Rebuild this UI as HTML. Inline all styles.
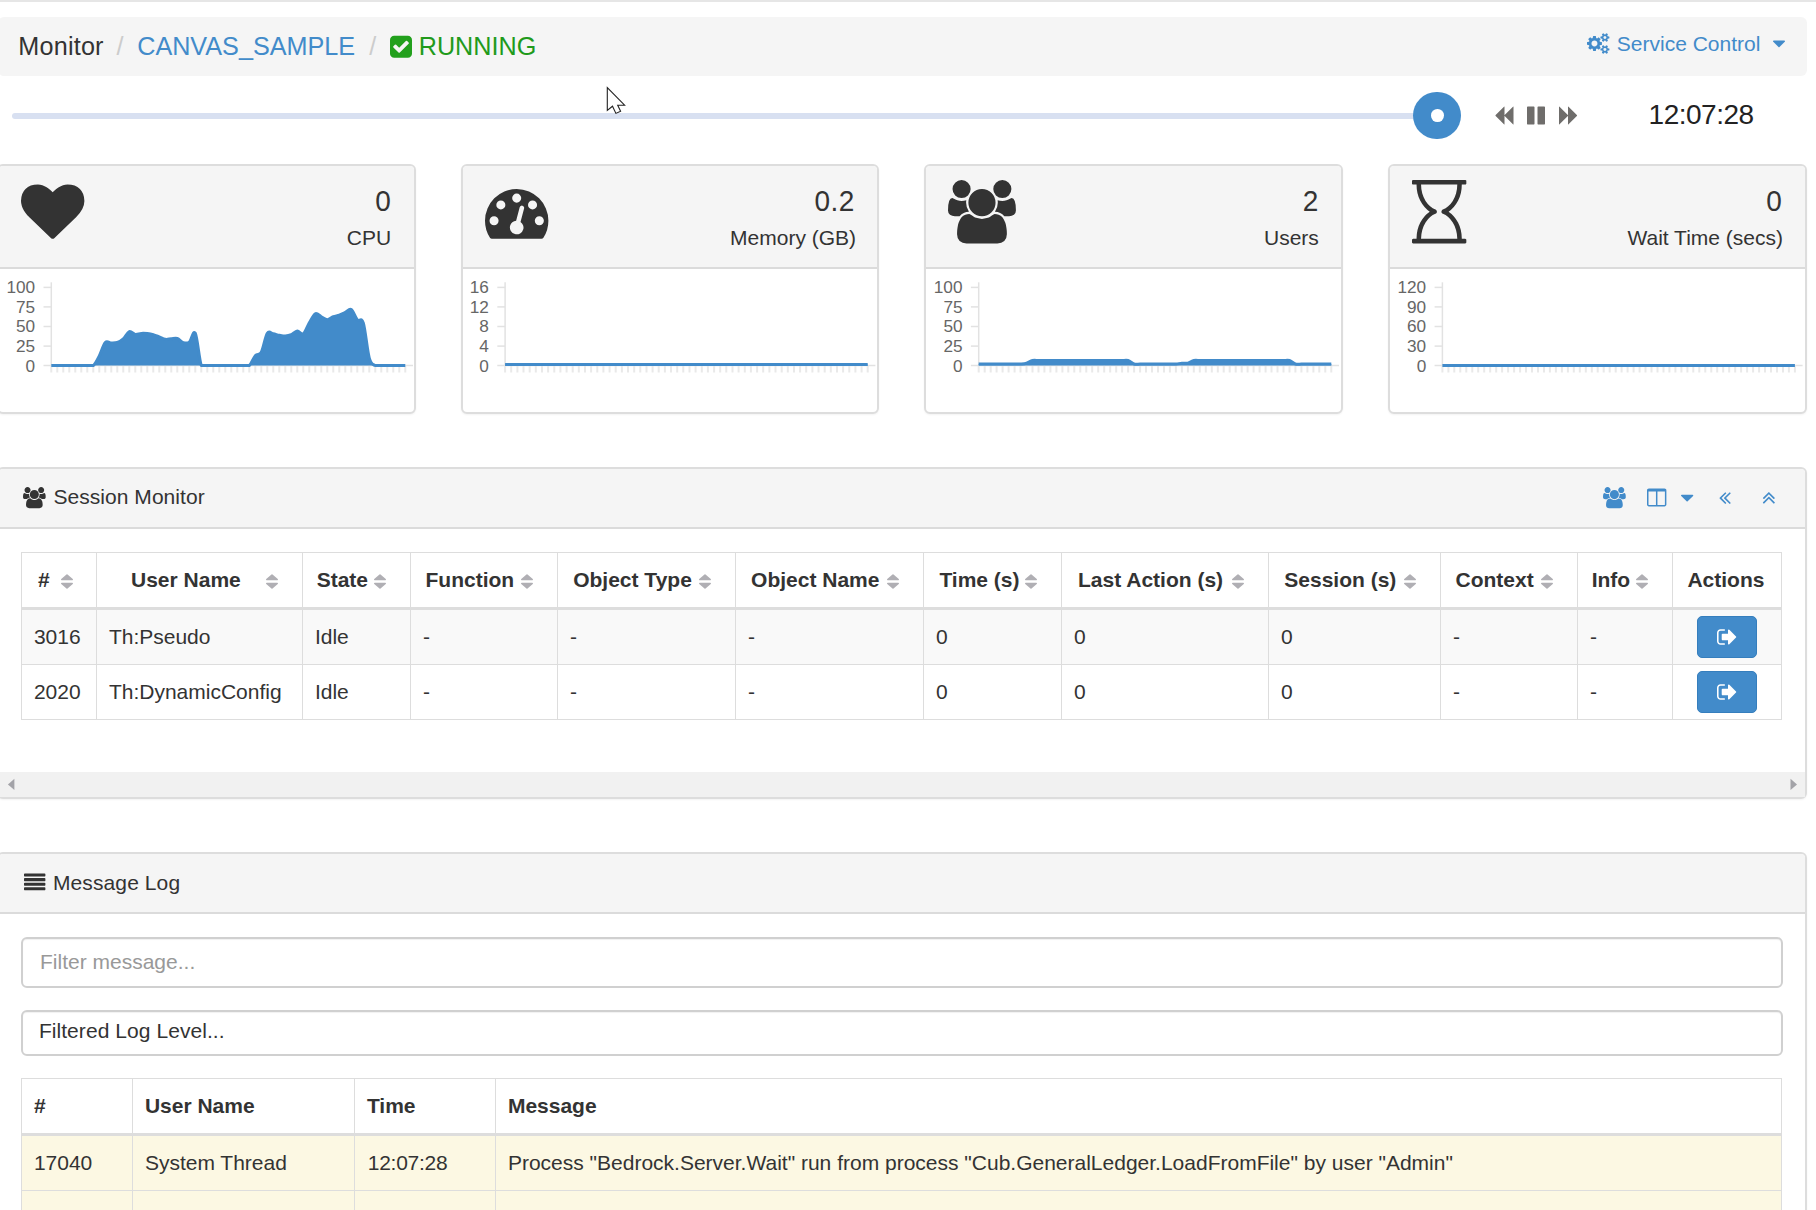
<!DOCTYPE html>
<html lang="en"><head><meta charset="utf-8"><title>Monitor</title>
<style>
html,body{margin:0;padding:0;background:#fff;}
body{width:1816px;height:1210px;overflow:hidden;position:relative;font-family:"Liberation Sans",Arial,Helvetica,sans-serif;color:#333;}
.ic{position:absolute;display:block;overflow:visible;}
.t{position:absolute;white-space:nowrap;}
.abs{position:absolute;box-sizing:border-box;}
.panel{position:absolute;box-sizing:border-box;border:2px solid #dddddd;border-radius:6px;background:#fff;box-shadow:0 1px 2px rgba(0,0,0,.05);}
.ph{position:absolute;left:0;right:0;top:0;box-sizing:border-box;background:#f5f5f5;border-bottom:2px solid #dbdbdb;border-radius:4px 4px 0 0;}
table{border-collapse:separate;border-spacing:0;table-layout:fixed;position:absolute;font-size:21px;line-height:30px;border-left:1px solid #ddd;border-top:1px solid #ddd;}
td,th{border-right:1px solid #ddd;border-bottom:1px solid #ddd;padding:0 0 1px 11.9px;box-sizing:border-box;text-align:left;vertical-align:middle;white-space:nowrap;overflow:hidden;}
th{font-weight:bold;height:57px;}
td{height:55px;}
thead th{border-bottom:3px solid #ddd;}
.hc{position:relative;padding:0;overflow:visible;}
.hl{position:absolute;white-space:nowrap;line-height:30px;}
.btn{display:block;margin:0 auto;width:60px;height:42px;box-sizing:border-box;background:#428bca;border:1px solid #357ebd;border-radius:5px;position:relative;}
</style></head><body>

<div class="abs" style="left:0;top:0;width:1816px;height:2px;background:#e6e6e6"></div>
<div class="abs" style="left:-2px;top:17px;width:1809px;height:59px;background:#f5f5f5;border-radius:6px"></div>
<div class="t" style="left:18.30px;top:34.07px;font-size:25.2px;line-height:25.2px;color:#333;font-weight:normal;letter-spacing:.2px">Monitor</div>
<div class="t" style="left:116.50px;top:34.07px;font-size:25.2px;line-height:25.2px;color:#ccc;font-weight:normal;">/</div>
<div class="t" style="left:137.20px;top:34.07px;font-size:25.2px;line-height:25.2px;color:#428bca;font-weight:normal;">CANVAS_SAMPLE</div>
<div class="t" style="left:369.30px;top:34.07px;font-size:25.2px;line-height:25.2px;color:#ccc;font-weight:normal;">/</div>
<svg class="ic" style="left:390.00px;top:33.67px;width:22.00px;height:25.67px;" viewBox="0 -1536 1536 1792"><path fill="#22a01c" transform="scale(1,-1)" d="M685 237l614 614q19 19 19 45t-19 45l-102 102q-19 19 -45 19t-45 -19l-467 -467l-211 211q-19 19 -45 19t-45 -19l-102 -102q-19 -19 -19 -45t19 -45l358 -358q19 -19 45 -19t45 19zM1536 1120v-960q0 -119 -84.5 -203.5t-203.5 -84.5h-960q-119 0 -203.5 84.5 t-84.5 203.5v960q0 119 84.5 203.5t203.5 84.5h960q119 0 203.5 -84.5t84.5 -203.5z"/></svg>
<div class="t" style="left:418.70px;top:34.07px;font-size:25.2px;line-height:25.2px;color:#219a1b;font-weight:normal;">RUNNING</div>
<svg class="ic" style="left:1586.80px;top:33.04px;width:22.40px;height:20.91px;" viewBox="0 -1536 1920 1792"><path fill="#428bca" transform="scale(1,-1)" d="M896 640q0 106 -75 181t-181 75t-181 -75t-75 -181t75 -181t181 -75t181 75t75 181zM1664 128q0 52 -38 90t-90 38t-90 -38t-38 -90q0 -53 37.5 -90.5t90.5 -37.5t90.5 37.5t37.5 90.5zM1664 1152q0 52 -38 90t-90 38t-90 -38t-38 -90q0 -53 37.5 -90.5t90.5 -37.5 t90.5 37.5t37.5 90.5zM1280 731v-185q0 -10 -7 -19.5t-16 -10.5l-155 -24q-11 -35 -32 -76q34 -48 90 -115q7 -11 7 -20q0 -12 -7 -19q-23 -30 -82.5 -89.5t-78.5 -59.5q-11 0 -21 7l-115 90q-37 -19 -77 -31q-11 -108 -23 -155q-7 -24 -30 -24h-186q-11 0 -20 7.5t-10 17.5 l-23 153q-34 10 -75 31l-118 -89q-7 -7 -20 -7q-11 0 -21 8q-144 133 -144 160q0 9 7 19q10 14 41 53t47 61q-23 44 -35 82l-152 24q-10 1 -17 9.5t-7 19.5v185q0 10 7 19.5t16 10.5l155 24q11 35 32 76q-34 48 -90 115q-7 11 -7 20q0 12 7 20q22 30 82 89t79 59q11 0 21 -7 l115 -90q34 18 77 32q11 108 23 154q7 24 30 24h186q11 0 20 -7.5t10 -17.5l23 -153q34 -10 75 -31l118 89q8 7 20 7q11 0 21 -8q144 -133 144 -160q0 -8 -7 -19q-12 -16 -42 -54t-45 -60q23 -48 34 -82l152 -23q10 -2 17 -10.5t7 -19.5zM1920 198v-140q0 -16 -149 -31 q-12 -27 -30 -52q51 -113 51 -138q0 -4 -4 -7q-122 -71 -124 -71q-8 0 -46 47t-52 68q-20 -2 -30 -2t-30 2q-14 -21 -52 -68t-46 -47q-2 0 -124 71q-4 3 -4 7q0 25 51 138q-18 25 -30 52q-149 15 -149 31v140q0 16 149 31q13 29 30 52q-51 113 -51 138q0 4 4 7q4 2 35 20 t59 34t30 16q8 0 46 -46.5t52 -67.5q20 2 30 2t30 -2q51 71 92 112l6 2q4 0 124 -70q4 -3 4 -7q0 -25 -51 -138q17 -23 30 -52q149 -15 149 -31zM1920 1222v-140q0 -16 -149 -31q-12 -27 -30 -52q51 -113 51 -138q0 -4 -4 -7q-122 -71 -124 -71q-8 0 -46 47t-52 68 q-20 -2 -30 -2t-30 2q-14 -21 -52 -68t-46 -47q-2 0 -124 71q-4 3 -4 7q0 25 51 138q-18 25 -30 52q-149 15 -149 31v140q0 16 149 31q13 29 30 52q-51 113 -51 138q0 4 4 7q4 2 35 20t59 34t30 16q8 0 46 -46.5t52 -67.5q20 2 30 2t30 -2q51 71 92 112l6 2q4 0 124 -70 q4 -3 4 -7q0 -25 -51 -138q17 -23 30 -52q149 -15 149 -31z"/></svg>
<div class="t" style="left:1616.80px;top:32.72px;font-size:21px;line-height:21px;color:#428bca;font-weight:normal;">Service Control</div>
<svg class="ic" style="left:1772.50px;top:32.77px;width:12.00px;height:21.00px;" viewBox="0 -1536 1024 1792"><path fill="#428bca" transform="scale(1,-1)" d="M1024 832q0 -26 -19 -45l-448 -448q-19 -19 -45 -19t-45 19l-448 448q-19 19 -19 45t19 45t45 19h896q26 0 45 -19t19 -45z"/></svg>
<div class="abs" style="left:12px;top:113px;width:1430px;height:6px;background:#d8e0f1;border-radius:3px"></div>
<div class="abs" style="left:1413.4px;top:91.9px;width:47.6px;height:47.6px;background:#428bca;border-radius:50%"></div>
<div class="abs" style="left:1430.8px;top:109.3px;width:12.8px;height:12.8px;background:#fff;border-radius:50%"></div>
<svg class="ic" style="left:1493.77px;top:104.82px;width:19.50px;height:21.00px;" viewBox="0 -1536 1664 1792"><path fill="#6f6d6b" transform="scale(1,-1)" d="M1619 1395q19 19 32 13t13 -32v-1472q0 -26 -13 -32t-32 13l-710 710q-9 9 -13 19v-710q0 -26 -13 -32t-32 13l-710 710q-19 19 -19 45t19 45l710 710q19 19 32 13t13 -32v-710q4 10 13 19z"/></svg>
<svg class="ic" style="left:1526.80px;top:104.80px;width:18.00px;height:21.00px;" viewBox="0 -1536 1536 1792"><path fill="#6f6d6b" transform="scale(1,-1)" d="M1536 1344v-1408q0 -26 -19 -45t-45 -19h-512q-26 0 -45 19t-19 45v1408q0 26 19 45t45 19h512q26 0 45 -19t19 -45zM640 1344v-1408q0 -26 -19 -45t-45 -19h-512q-26 0 -45 19t-19 45v1408q0 26 19 45t45 19h512q26 0 45 -19t19 -45z"/></svg>
<svg class="ic" style="left:1559.00px;top:104.82px;width:19.50px;height:21.00px;" viewBox="0 -1536 1664 1792"><path fill="#6f6d6b" transform="scale(1,-1)" d="M45 -115q-19 -19 -32 -13t-13 32v1472q0 26 13 32t32 -13l710 -710q9 -9 13 -19v710q0 26 13 32t32 -13l710 -710q19 -19 19 -45t-19 -45l-710 -710q-19 -19 -32 -13t-13 32v710q-4 -10 -13 -19z"/></svg>
<div class="t" style="left:1648.60px;top:101.20px;font-size:28px;line-height:28px;color:#222;font-weight:normal;letter-spacing:-.5px">12:07:28</div>
<svg class="ic" style="left:600px;top:80px;width:40px;height:40px" viewBox="600 80 40 40"><path d="M607.3 87.6V110.4L612.5 106.2L615.9 113.4L620.6 111.3L617.7 105.2H624.6Z" fill="#fff" stroke="#222" stroke-width="1.1" stroke-linejoin="miter"/></svg>
<div class="panel" style="left:-3px;top:164px;width:419px;height:250px"><div class="ph" style="height:103px"></div></div>
<svg class="ic" style="left:21.20px;top:179.70px;width:63.40px;height:63.40px;" viewBox="0 -1536 1792 1792"><path fill="#333" transform="scale(1,-1)" d="M896 -128q-26 0 -44 18l-624 602q-10 8 -27.5 26t-55.5 65.5t-68 97.5t-53.5 121t-23.5 138q0 220 127 344t351 124q62 0 126.5 -21.5t120 -58t95.5 -68.5t76 -68q36 36 76 68t95.5 68.5t120 58t126.5 21.5q224 0 351 -124t127 -344q0 -221 -229 -450l-623 -600 q-18 -18 -44 -18z"/></svg>
<div class="t" style="right:1425.10px;top:187.60px;font-size:28px;line-height:28px;color:#333;font-weight:normal;transform:scaleY(1.06);transform-origin:50% 82%;">0</div>
<div class="t" style="right:1424.90px;top:227.12px;font-size:21px;line-height:21px;color:#333;font-weight:normal;">CPU</div>
<div class="panel" style="left:461px;top:164px;width:418px;height:250px"><div class="ph" style="height:103px"></div></div>
<svg class="ic" style="left:484.60px;top:179.70px;width:63.40px;height:63.40px;" viewBox="0 -1536 1792 1792"><path fill="#333" transform="scale(1,-1)" d="M384 384q0 53 -37.5 90.5t-90.5 37.5t-90.5 -37.5t-37.5 -90.5t37.5 -90.5t90.5 -37.5t90.5 37.5t37.5 90.5zM576 832q0 53 -37.5 90.5t-90.5 37.5t-90.5 -37.5t-37.5 -90.5t37.5 -90.5t90.5 -37.5t90.5 37.5t37.5 90.5zM1004 351l101 382q6 26 -7.5 48.5t-38.5 29.5 t-48 -6.5t-30 -39.5l-101 -382q-60 -5 -107 -43.5t-63 -98.5q-20 -77 20 -146t117 -89t146 20t89 117q16 60 -6 117t-72 91zM1664 384q0 53 -37.5 90.5t-90.5 37.5t-90.5 -37.5t-37.5 -90.5t37.5 -90.5t90.5 -37.5t90.5 37.5t37.5 90.5zM1024 1024q0 53 -37.5 90.5 t-90.5 37.5t-90.5 -37.5t-37.5 -90.5t37.5 -90.5t90.5 -37.5t90.5 37.5t37.5 90.5zM1472 832q0 53 -37.5 90.5t-90.5 37.5t-90.5 -37.5t-37.5 -90.5t37.5 -90.5t90.5 -37.5t90.5 37.5t37.5 90.5zM1792 384q0 -261 -141 -483q-19 -29 -54 -29h-1402q-35 0 -54 29 q-141 221 -141 483q0 182 71 348t191 286t286 191t348 71t348 -71t286 -191t191 -286t71 -348z"/></svg>
<div class="t" style="right:961.20px;top:187.60px;font-size:28px;line-height:28px;color:#333;font-weight:normal;transform:scaleY(1.06);transform-origin:50% 82%;letter-spacing:.5px">0.2</div>
<div class="t" style="right:959.90px;top:227.12px;font-size:21px;line-height:21px;color:#333;font-weight:normal;">Memory (GB)</div>
<div class="panel" style="left:924px;top:164px;width:419px;height:250px"><div class="ph" style="height:103px"></div></div>
<svg class="ic" style="left:948.00px;top:179.70px;width:67.93px;height:63.40px;" viewBox="0 -1536 1920 1792"><path fill="#333" transform="scale(1,-1)" d="M593 640q-162 -5 -265 -128h-134q-82 0 -138 40.5t-56 118.5q0 353 124 353q6 0 43.5 -21t97.5 -42.5t119 -21.5q67 0 133 23q-5 -37 -5 -66q0 -139 81 -256zM1664 3q0 -120 -73 -189.5t-194 -69.5h-874q-121 0 -194 69.5t-73 189.5q0 53 3.5 103.5t14 109t26.5 108.5 t43 97.5t62 81t85.5 53.5t111.5 20q10 0 43 -21.5t73 -48t107 -48t135 -21.5t135 21.5t107 48t73 48t43 21.5q61 0 111.5 -20t85.5 -53.5t62 -81t43 -97.5t26.5 -108.5t14 -109t3.5 -103.5zM640 1280q0 -106 -75 -181t-181 -75t-181 75t-75 181t75 181t181 75t181 -75 t75 -181zM1344 896q0 -159 -112.5 -271.5t-271.5 -112.5t-271.5 112.5t-112.5 271.5t112.5 271.5t271.5 112.5t271.5 -112.5t112.5 -271.5zM1920 671q0 -78 -56 -118.5t-138 -40.5h-134q-103 123 -265 128q81 117 81 256q0 29 -5 66q66 -23 133 -23q59 0 119 21.5t97.5 42.5 t43.5 21q124 0 124 -353zM1792 1280q0 -106 -75 -181t-181 -75t-181 75t-75 181t75 181t181 75t181 -75t75 -181z"/></svg>
<div class="t" style="right:497.80px;top:187.60px;font-size:28px;line-height:28px;color:#333;font-weight:normal;transform:scaleY(1.06);transform-origin:50% 82%;">2</div>
<div class="t" style="right:497.20px;top:227.12px;font-size:21px;line-height:21px;color:#333;font-weight:normal;">Users</div>
<div class="panel" style="left:1388px;top:164px;width:419px;height:250px"><div class="ph" style="height:103px"></div></div>
<svg class="ic" style="left:1411.50px;top:179.70px;width:54.34px;height:63.40px;" viewBox="0 -1536 1536 1792"><path fill="#333" transform="scale(1,-1)" d="M1408 1408q0 -261 -106.5 -461.5t-266.5 -306.5q160 -106 266.5 -306.5t106.5 -461.5h96q14 0 23 -9t9 -23v-64q0 -14 -9 -23t-23 -9h-1472q-14 0 -23 9t-9 23v64q0 14 9 23t23 9h96q0 261 106.5 461.5t266.5 306.5q-160 106 -266.5 306.5t-106.5 461.5h-96q-14 0 -23 9 t-9 23v64q0 14 9 23t23 9h1472q14 0 23 -9t9 -23v-64q0 -14 -9 -23t-23 -9h-96zM874 700q77 29 149 92.5t129.5 152.5t92.5 210t35 253h-1024q0 -132 35 -253t92.5 -210t129.5 -152.5t149 -92.5q19 -7 30.5 -23.5t11.5 -36.5t-11.5 -36.5t-30.5 -23.5q-77 -29 -149 -92.5 t-129.5 -152.5t-92.5 -210t-35 -253h1024q0 132 -35 253t-92.5 210t-129.5 152.5t-149 92.5q-19 7 -30.5 23.5t-11.5 36.5t11.5 36.5t30.5 23.5z"/></svg>
<div class="t" style="right:34.10px;top:187.60px;font-size:28px;line-height:28px;color:#333;font-weight:normal;transform:scaleY(1.06);transform-origin:50% 82%;">0</div>
<div class="t" style="right:33.00px;top:227.12px;font-size:21px;line-height:21px;color:#333;font-weight:normal;">Wait Time (secs)</div>
<svg class="ic" style="left:0;top:0;width:1816px;height:430px" viewBox="0 0 1816 430" font-family="Liberation Sans, Arial, sans-serif"><path d="M51.3 282.3V365.6" stroke="#e2e2e2" stroke-width="1.5" fill="none"/><path d="M43.5 365.6H413.0" stroke="#e2e2e2" stroke-width="1.5" fill="none"/><path d="M43.5 287.4H51.3" stroke="#e2e2e2" stroke-width="1.5" fill="none"/><path d="M43.5 306.9H51.3" stroke="#e2e2e2" stroke-width="1.5" fill="none"/><path d="M43.5 326.5H51.3" stroke="#e2e2e2" stroke-width="1.5" fill="none"/><path d="M43.5 346.1H51.3" stroke="#e2e2e2" stroke-width="1.5" fill="none"/><path d="M51.3 365.6v7M57.3 365.6v7M63.3 365.6v7M69.3 365.6v7M75.3 365.6v7M81.3 365.6v7M87.3 365.6v7M93.3 365.6v7M99.3 365.6v7M105.3 365.6v7M111.3 365.6v7M117.3 365.6v7M123.3 365.6v7M129.3 365.6v7M135.3 365.6v7M141.3 365.6v7M147.3 365.6v7M153.3 365.6v7M159.3 365.6v7M165.3 365.6v7M171.3 365.6v7M177.3 365.6v7M183.3 365.6v7M189.3 365.6v7M195.3 365.6v7M201.3 365.6v7M207.3 365.6v7M213.3 365.6v7M219.3 365.6v7M225.3 365.6v7M231.3 365.6v7M237.3 365.6v7M243.3 365.6v7M249.3 365.6v7M255.3 365.6v7M261.3 365.6v7M267.3 365.6v7M273.3 365.6v7M279.3 365.6v7M285.3 365.6v7M291.3 365.6v7M297.3 365.6v7M303.3 365.6v7M309.3 365.6v7M315.3 365.6v7M321.3 365.6v7M327.3 365.6v7M333.3 365.6v7M339.3 365.6v7M345.3 365.6v7M351.3 365.6v7M357.3 365.6v7M363.3 365.6v7M369.3 365.6v7M375.3 365.6v7M381.3 365.6v7M387.3 365.6v7M393.3 365.6v7M399.3 365.6v7M405.3 365.6v7" stroke="#e9e9e9" stroke-width="2" fill="none"/><text x="35.1" y="293.0" text-anchor="end" font-size="17.2" fill="#666">100</text><text x="35.1" y="312.9" text-anchor="end" font-size="17.2" fill="#666">75</text><text x="35.1" y="332.1" text-anchor="end" font-size="17.2" fill="#666">50</text><text x="35.1" y="351.9" text-anchor="end" font-size="17.2" fill="#666">25</text><text x="35.1" y="372.0" text-anchor="end" font-size="17.2" fill="#666">0</text><path d="M51.30 365.60C52.32 365.60 55.26 365.60 57.30 365.60C59.34 365.60 61.26 365.60 63.30 365.60C65.34 365.60 67.26 365.60 69.30 365.60C71.34 365.60 73.26 365.60 75.30 365.60C77.34 365.60 79.26 365.60 81.30 365.60C83.34 365.60 85.26 365.60 87.30 365.60C89.34 365.60 91.26 365.60 93.30 365.60C95.34 363.94 97.26 359.76 99.30 355.83C101.34 351.89 103.26 344.63 105.30 342.45C107.34 340.27 109.26 343.00 111.30 343.00C113.34 343.00 115.26 343.17 117.30 342.45C119.34 341.73 121.26 340.61 123.30 338.78C125.34 336.94 127.26 332.41 129.30 331.66C131.34 330.92 133.26 334.11 135.30 334.40C137.34 334.69 139.26 333.53 141.30 333.38C143.34 333.24 145.26 333.33 147.30 333.54C149.34 333.75 151.26 334.06 153.30 334.63C155.34 335.20 157.26 336.10 159.30 336.90C161.34 337.70 163.26 339.01 165.30 339.32C167.34 339.64 169.26 338.92 171.30 338.78C173.34 338.63 175.26 337.81 177.30 338.46C179.34 339.12 181.26 341.98 183.30 342.61C185.34 343.23 187.26 343.72 189.30 342.14C191.34 340.56 193.26 329.32 195.30 333.30C197.34 337.29 199.26 360.11 201.30 365.60C203.34 365.60 205.26 365.60 207.30 365.60C209.34 365.60 211.26 365.60 213.30 365.60C215.34 365.60 217.26 365.60 219.30 365.60C221.34 365.60 223.26 365.60 225.30 365.60C227.34 365.60 229.26 365.60 231.30 365.60C233.34 365.60 235.26 365.60 237.30 365.60C239.34 365.60 241.26 365.60 243.30 365.60C245.34 365.60 247.26 365.60 249.30 365.60C251.34 363.91 253.26 357.93 255.30 355.67C257.34 353.41 259.26 356.11 261.30 352.31C263.34 348.50 265.26 336.44 267.30 333.30C269.34 330.17 271.26 333.52 273.30 333.85C275.34 334.18 277.26 334.89 279.30 335.26C281.34 335.63 283.26 336.13 285.30 336.04C287.34 335.95 289.26 335.56 291.30 334.71C293.34 333.86 295.26 331.18 297.30 331.04C299.34 330.89 301.26 335.25 303.30 333.85C305.34 332.45 307.26 326.24 309.30 322.82C311.34 319.41 313.26 314.79 315.30 313.75C317.34 312.72 319.26 315.71 321.30 316.73C323.34 317.74 325.26 319.70 327.30 319.70C329.34 319.70 331.26 317.51 333.30 316.73C335.34 315.94 337.26 315.83 339.30 315.08C341.34 314.34 343.26 313.28 345.30 312.35C347.34 311.42 349.26 308.33 351.30 309.61C353.34 310.89 355.26 317.58 357.30 319.85C359.34 322.13 361.26 316.48 363.30 322.98C365.34 329.48 367.26 350.85 369.30 358.09C371.34 365.34 373.26 364.32 375.30 365.60C377.34 365.60 379.26 365.60 381.30 365.60C383.34 365.60 385.26 365.60 387.30 365.60C389.34 365.60 391.26 365.60 393.30 365.60C395.34 365.60 397.26 365.60 399.30 365.60C401.34 365.60 404.28 365.60 405.30 365.60L405.30 365.60L51.30 365.60Z" fill="#428bca"/><path d="M51.30 365.60C52.32 365.60 55.26 365.60 57.30 365.60C59.34 365.60 61.26 365.60 63.30 365.60C65.34 365.60 67.26 365.60 69.30 365.60C71.34 365.60 73.26 365.60 75.30 365.60C77.34 365.60 79.26 365.60 81.30 365.60C83.34 365.60 85.26 365.60 87.30 365.60C89.34 365.60 91.26 365.60 93.30 365.60C95.34 363.94 97.26 359.76 99.30 355.83C101.34 351.89 103.26 344.63 105.30 342.45C107.34 340.27 109.26 343.00 111.30 343.00C113.34 343.00 115.26 343.17 117.30 342.45C119.34 341.73 121.26 340.61 123.30 338.78C125.34 336.94 127.26 332.41 129.30 331.66C131.34 330.92 133.26 334.11 135.30 334.40C137.34 334.69 139.26 333.53 141.30 333.38C143.34 333.24 145.26 333.33 147.30 333.54C149.34 333.75 151.26 334.06 153.30 334.63C155.34 335.20 157.26 336.10 159.30 336.90C161.34 337.70 163.26 339.01 165.30 339.32C167.34 339.64 169.26 338.92 171.30 338.78C173.34 338.63 175.26 337.81 177.30 338.46C179.34 339.12 181.26 341.98 183.30 342.61C185.34 343.23 187.26 343.72 189.30 342.14C191.34 340.56 193.26 329.32 195.30 333.30C197.34 337.29 199.26 360.11 201.30 365.60C203.34 365.60 205.26 365.60 207.30 365.60C209.34 365.60 211.26 365.60 213.30 365.60C215.34 365.60 217.26 365.60 219.30 365.60C221.34 365.60 223.26 365.60 225.30 365.60C227.34 365.60 229.26 365.60 231.30 365.60C233.34 365.60 235.26 365.60 237.30 365.60C239.34 365.60 241.26 365.60 243.30 365.60C245.34 365.60 247.26 365.60 249.30 365.60C251.34 363.91 253.26 357.93 255.30 355.67C257.34 353.41 259.26 356.11 261.30 352.31C263.34 348.50 265.26 336.44 267.30 333.30C269.34 330.17 271.26 333.52 273.30 333.85C275.34 334.18 277.26 334.89 279.30 335.26C281.34 335.63 283.26 336.13 285.30 336.04C287.34 335.95 289.26 335.56 291.30 334.71C293.34 333.86 295.26 331.18 297.30 331.04C299.34 330.89 301.26 335.25 303.30 333.85C305.34 332.45 307.26 326.24 309.30 322.82C311.34 319.41 313.26 314.79 315.30 313.75C317.34 312.72 319.26 315.71 321.30 316.73C323.34 317.74 325.26 319.70 327.30 319.70C329.34 319.70 331.26 317.51 333.30 316.73C335.34 315.94 337.26 315.83 339.30 315.08C341.34 314.34 343.26 313.28 345.30 312.35C347.34 311.42 349.26 308.33 351.30 309.61C353.34 310.89 355.26 317.58 357.30 319.85C359.34 322.13 361.26 316.48 363.30 322.98C365.34 329.48 367.26 350.85 369.30 358.09C371.34 365.34 373.26 364.32 375.30 365.60C377.34 365.60 379.26 365.60 381.30 365.60C383.34 365.60 385.26 365.60 387.30 365.60C389.34 365.60 391.26 365.60 393.30 365.60C395.34 365.60 397.26 365.60 399.30 365.60C401.34 365.60 404.28 365.60 405.30 365.60" fill="none" stroke="#428bca" stroke-width="3" stroke-linejoin="round"/><path d="M505.1 282.3V365.6" stroke="#e2e2e2" stroke-width="1.5" fill="none"/><path d="M497.3 365.6H875.4" stroke="#e2e2e2" stroke-width="1.5" fill="none"/><path d="M497.3 287.4H505.1" stroke="#e2e2e2" stroke-width="1.5" fill="none"/><path d="M497.3 306.9H505.1" stroke="#e2e2e2" stroke-width="1.5" fill="none"/><path d="M497.3 326.5H505.1" stroke="#e2e2e2" stroke-width="1.5" fill="none"/><path d="M497.3 346.1H505.1" stroke="#e2e2e2" stroke-width="1.5" fill="none"/><path d="M505.1 365.6v7M511.2 365.6v7M517.4 365.6v7M523.5 365.6v7M529.7 365.6v7M535.8 365.6v7M542.0 365.6v7M548.1 365.6v7M554.3 365.6v7M560.4 365.6v7M566.6 365.6v7M572.7 365.6v7M578.8 365.6v7M585.0 365.6v7M591.1 365.6v7M597.3 365.6v7M603.4 365.6v7M609.6 365.6v7M615.7 365.6v7M621.9 365.6v7M628.0 365.6v7M634.2 365.6v7M640.3 365.6v7M646.5 365.6v7M652.6 365.6v7M658.7 365.6v7M664.9 365.6v7M671.0 365.6v7M677.2 365.6v7M683.3 365.6v7M689.5 365.6v7M695.6 365.6v7M701.8 365.6v7M707.9 365.6v7M714.1 365.6v7M720.2 365.6v7M726.3 365.6v7M732.5 365.6v7M738.6 365.6v7M744.8 365.6v7M750.9 365.6v7M757.1 365.6v7M763.2 365.6v7M769.4 365.6v7M775.5 365.6v7M781.7 365.6v7M787.8 365.6v7M794.0 365.6v7M800.1 365.6v7M806.2 365.6v7M812.4 365.6v7M818.5 365.6v7M824.7 365.6v7M830.8 365.6v7M837.0 365.6v7M843.1 365.6v7M849.3 365.6v7M855.4 365.6v7M861.6 365.6v7M867.7 365.6v7" stroke="#e9e9e9" stroke-width="2" fill="none"/><text x="488.9" y="293.0" text-anchor="end" font-size="17.2" fill="#666">16</text><text x="488.9" y="312.9" text-anchor="end" font-size="17.2" fill="#666">12</text><text x="488.9" y="332.1" text-anchor="end" font-size="17.2" fill="#666">8</text><text x="488.9" y="351.9" text-anchor="end" font-size="17.2" fill="#666">4</text><text x="488.9" y="372.0" text-anchor="end" font-size="17.2" fill="#666">0</text><path d="M505.10 364.38C506.14 364.38 509.16 364.38 511.25 364.38C513.34 364.38 515.30 364.38 517.39 364.38C519.48 364.38 521.45 364.38 523.54 364.38C525.63 364.38 527.59 364.38 529.68 364.38C531.77 364.38 533.74 364.38 535.83 364.38C537.92 364.38 539.89 364.38 541.97 364.38C544.06 364.38 546.03 364.38 548.12 364.38C550.21 364.38 552.18 364.38 554.27 364.38C556.36 364.38 558.32 364.38 560.41 364.38C562.50 364.38 564.47 364.38 566.56 364.38C568.65 364.38 570.61 364.38 572.70 364.38C574.79 364.38 576.76 364.38 578.85 364.38C580.94 364.38 582.91 364.38 584.99 364.38C587.08 364.38 589.05 364.38 591.14 364.38C593.23 364.38 595.20 364.38 597.29 364.38C599.38 364.38 601.34 364.38 603.43 364.38C605.52 364.38 607.49 364.38 609.58 364.38C611.67 364.38 613.63 364.38 615.72 364.38C617.81 364.38 619.78 364.38 621.87 364.38C623.96 364.38 625.93 364.38 628.02 364.38C630.10 364.38 632.07 364.38 634.16 364.38C636.25 364.38 638.22 364.38 640.31 364.38C642.40 364.38 644.36 364.38 646.45 364.38C648.54 364.38 650.51 364.38 652.60 364.38C654.69 364.38 656.65 364.38 658.74 364.38C660.83 364.38 662.80 364.38 664.89 364.38C666.98 364.38 668.95 364.38 671.04 364.38C673.13 364.38 675.09 364.38 677.18 364.38C679.27 364.38 681.24 364.38 683.33 364.38C685.42 364.38 687.38 364.38 689.47 364.38C691.56 364.38 693.53 364.38 695.62 364.38C697.71 364.38 699.67 364.38 701.76 364.38C703.85 364.38 705.82 364.38 707.91 364.38C710.00 364.38 711.97 364.38 714.06 364.38C716.15 364.38 718.11 364.38 720.20 364.38C722.29 364.38 724.26 364.38 726.35 364.38C728.44 364.38 730.40 364.38 732.49 364.38C734.58 364.38 736.55 364.38 738.64 364.38C740.73 364.38 742.70 364.38 744.78 364.38C746.87 364.38 748.84 364.38 750.93 364.38C753.02 364.38 754.99 364.38 757.08 364.38C759.17 364.38 761.13 364.38 763.22 364.38C765.31 364.38 767.28 364.38 769.37 364.38C771.46 364.38 773.42 364.38 775.51 364.38C777.60 364.38 779.57 364.38 781.66 364.38C783.75 364.38 785.72 364.38 787.81 364.38C789.89 364.38 791.86 364.38 793.95 364.38C796.04 364.38 798.01 364.38 800.10 364.38C802.19 364.38 804.15 364.38 806.24 364.38C808.33 364.38 810.30 364.38 812.39 364.38C814.48 364.38 816.44 364.38 818.53 364.38C820.62 364.38 822.59 364.38 824.68 364.38C826.77 364.38 828.74 364.38 830.83 364.38C832.91 364.38 834.88 364.38 836.97 364.38C839.06 364.38 841.03 364.38 843.12 364.38C845.21 364.38 847.17 364.38 849.26 364.38C851.35 364.38 853.32 364.38 855.41 364.38C857.50 364.38 859.46 364.38 861.55 364.38C863.64 364.38 866.66 364.38 867.70 364.38L867.70 365.60L505.10 365.60Z" fill="#428bca"/><path d="M505.10 364.38C506.14 364.38 509.16 364.38 511.25 364.38C513.34 364.38 515.30 364.38 517.39 364.38C519.48 364.38 521.45 364.38 523.54 364.38C525.63 364.38 527.59 364.38 529.68 364.38C531.77 364.38 533.74 364.38 535.83 364.38C537.92 364.38 539.89 364.38 541.97 364.38C544.06 364.38 546.03 364.38 548.12 364.38C550.21 364.38 552.18 364.38 554.27 364.38C556.36 364.38 558.32 364.38 560.41 364.38C562.50 364.38 564.47 364.38 566.56 364.38C568.65 364.38 570.61 364.38 572.70 364.38C574.79 364.38 576.76 364.38 578.85 364.38C580.94 364.38 582.91 364.38 584.99 364.38C587.08 364.38 589.05 364.38 591.14 364.38C593.23 364.38 595.20 364.38 597.29 364.38C599.38 364.38 601.34 364.38 603.43 364.38C605.52 364.38 607.49 364.38 609.58 364.38C611.67 364.38 613.63 364.38 615.72 364.38C617.81 364.38 619.78 364.38 621.87 364.38C623.96 364.38 625.93 364.38 628.02 364.38C630.10 364.38 632.07 364.38 634.16 364.38C636.25 364.38 638.22 364.38 640.31 364.38C642.40 364.38 644.36 364.38 646.45 364.38C648.54 364.38 650.51 364.38 652.60 364.38C654.69 364.38 656.65 364.38 658.74 364.38C660.83 364.38 662.80 364.38 664.89 364.38C666.98 364.38 668.95 364.38 671.04 364.38C673.13 364.38 675.09 364.38 677.18 364.38C679.27 364.38 681.24 364.38 683.33 364.38C685.42 364.38 687.38 364.38 689.47 364.38C691.56 364.38 693.53 364.38 695.62 364.38C697.71 364.38 699.67 364.38 701.76 364.38C703.85 364.38 705.82 364.38 707.91 364.38C710.00 364.38 711.97 364.38 714.06 364.38C716.15 364.38 718.11 364.38 720.20 364.38C722.29 364.38 724.26 364.38 726.35 364.38C728.44 364.38 730.40 364.38 732.49 364.38C734.58 364.38 736.55 364.38 738.64 364.38C740.73 364.38 742.70 364.38 744.78 364.38C746.87 364.38 748.84 364.38 750.93 364.38C753.02 364.38 754.99 364.38 757.08 364.38C759.17 364.38 761.13 364.38 763.22 364.38C765.31 364.38 767.28 364.38 769.37 364.38C771.46 364.38 773.42 364.38 775.51 364.38C777.60 364.38 779.57 364.38 781.66 364.38C783.75 364.38 785.72 364.38 787.81 364.38C789.89 364.38 791.86 364.38 793.95 364.38C796.04 364.38 798.01 364.38 800.10 364.38C802.19 364.38 804.15 364.38 806.24 364.38C808.33 364.38 810.30 364.38 812.39 364.38C814.48 364.38 816.44 364.38 818.53 364.38C820.62 364.38 822.59 364.38 824.68 364.38C826.77 364.38 828.74 364.38 830.83 364.38C832.91 364.38 834.88 364.38 836.97 364.38C839.06 364.38 841.03 364.38 843.12 364.38C845.21 364.38 847.17 364.38 849.26 364.38C851.35 364.38 853.32 364.38 855.41 364.38C857.50 364.38 859.46 364.38 861.55 364.38C863.64 364.38 866.66 364.38 867.70 364.38" fill="none" stroke="#428bca" stroke-width="3" stroke-linejoin="round"/><path d="M978.7 282.3V365.6" stroke="#e2e2e2" stroke-width="1.5" fill="none"/><path d="M970.9 365.6H1339.0" stroke="#e2e2e2" stroke-width="1.5" fill="none"/><path d="M970.9 287.4H978.7" stroke="#e2e2e2" stroke-width="1.5" fill="none"/><path d="M970.9 306.9H978.7" stroke="#e2e2e2" stroke-width="1.5" fill="none"/><path d="M970.9 326.5H978.7" stroke="#e2e2e2" stroke-width="1.5" fill="none"/><path d="M970.9 346.1H978.7" stroke="#e2e2e2" stroke-width="1.5" fill="none"/><path d="M978.7 365.6v7M984.7 365.6v7M990.7 365.6v7M996.6 365.6v7M1002.6 365.6v7M1008.6 365.6v7M1014.6 365.6v7M1020.5 365.6v7M1026.5 365.6v7M1032.5 365.6v7M1038.5 365.6v7M1044.4 365.6v7M1050.4 365.6v7M1056.4 365.6v7M1062.4 365.6v7M1068.3 365.6v7M1074.3 365.6v7M1080.3 365.6v7M1086.3 365.6v7M1092.2 365.6v7M1098.2 365.6v7M1104.2 365.6v7M1110.2 365.6v7M1116.2 365.6v7M1122.1 365.6v7M1128.1 365.6v7M1134.1 365.6v7M1140.1 365.6v7M1146.0 365.6v7M1152.0 365.6v7M1158.0 365.6v7M1164.0 365.6v7M1169.9 365.6v7M1175.9 365.6v7M1181.9 365.6v7M1187.9 365.6v7M1193.8 365.6v7M1199.8 365.6v7M1205.8 365.6v7M1211.8 365.6v7M1217.8 365.6v7M1223.7 365.6v7M1229.7 365.6v7M1235.7 365.6v7M1241.7 365.6v7M1247.6 365.6v7M1253.6 365.6v7M1259.6 365.6v7M1265.6 365.6v7M1271.5 365.6v7M1277.5 365.6v7M1283.5 365.6v7M1289.5 365.6v7M1295.4 365.6v7M1301.4 365.6v7M1307.4 365.6v7M1313.4 365.6v7M1319.3 365.6v7M1325.3 365.6v7M1331.3 365.6v7" stroke="#e9e9e9" stroke-width="2" fill="none"/><text x="962.5" y="293.0" text-anchor="end" font-size="17.2" fill="#666">100</text><text x="962.5" y="312.9" text-anchor="end" font-size="17.2" fill="#666">75</text><text x="962.5" y="332.1" text-anchor="end" font-size="17.2" fill="#666">50</text><text x="962.5" y="351.9" text-anchor="end" font-size="17.2" fill="#666">25</text><text x="962.5" y="372.0" text-anchor="end" font-size="17.2" fill="#666">0</text><path d="M978.70 364.04C979.72 364.04 982.64 364.04 984.68 364.04C986.71 364.04 988.62 364.04 990.65 364.04C992.68 364.04 994.60 364.04 996.63 364.04C998.66 364.04 1000.57 364.04 1002.61 364.04C1004.64 364.04 1006.55 364.04 1008.58 364.04C1010.61 364.04 1012.53 364.04 1014.56 364.04C1016.59 364.04 1018.50 364.17 1020.53 364.04C1022.57 363.90 1024.48 363.85 1026.51 363.25C1028.54 362.66 1030.45 360.98 1032.49 360.52C1034.52 360.05 1036.43 360.52 1038.46 360.52C1040.49 360.52 1042.41 360.52 1044.44 360.52C1046.47 360.52 1048.38 360.52 1050.42 360.52C1052.45 360.52 1054.36 360.52 1056.39 360.52C1058.42 360.52 1060.34 360.52 1062.37 360.52C1064.40 360.52 1066.31 360.52 1068.34 360.52C1070.38 360.52 1072.29 360.52 1074.32 360.52C1076.35 360.52 1078.26 360.52 1080.30 360.52C1082.33 360.52 1084.24 360.52 1086.27 360.52C1088.30 360.52 1090.22 360.52 1092.25 360.52C1094.28 360.52 1096.19 360.52 1098.23 360.52C1100.26 360.52 1102.17 360.52 1104.20 360.52C1106.23 360.52 1108.15 360.52 1110.18 360.52C1112.21 360.52 1114.12 360.52 1116.15 360.52C1118.19 360.52 1120.10 360.52 1122.13 360.52C1124.16 360.52 1126.07 359.92 1128.11 360.52C1130.14 361.12 1132.05 363.44 1134.08 364.04C1136.11 364.63 1138.03 364.04 1140.06 364.04C1142.09 364.04 1144.00 364.04 1146.04 364.04C1148.07 364.04 1149.98 364.04 1152.01 364.04C1154.04 364.04 1155.96 364.04 1157.99 364.04C1160.02 364.04 1161.93 364.04 1163.96 364.04C1166.00 364.04 1167.91 364.04 1169.94 364.04C1171.97 364.04 1173.89 364.17 1175.92 364.04C1177.95 363.90 1179.86 363.41 1181.89 363.25C1183.93 363.09 1185.84 363.56 1187.87 363.10C1189.90 362.63 1191.81 360.96 1193.85 360.52C1195.88 360.08 1197.79 360.52 1199.82 360.52C1201.85 360.52 1203.77 360.52 1205.80 360.52C1207.83 360.52 1209.74 360.52 1211.77 360.52C1213.81 360.52 1215.72 360.52 1217.75 360.52C1219.78 360.52 1221.70 360.52 1223.73 360.52C1225.76 360.52 1227.67 360.52 1229.70 360.52C1231.74 360.52 1233.65 360.52 1235.68 360.52C1237.71 360.52 1239.62 360.52 1241.66 360.52C1243.69 360.52 1245.60 360.52 1247.63 360.52C1249.66 360.52 1251.58 360.52 1253.61 360.52C1255.64 360.52 1257.55 360.52 1259.58 360.52C1261.62 360.52 1263.53 360.52 1265.56 360.52C1267.59 360.52 1269.51 360.52 1271.54 360.52C1273.57 360.52 1275.48 360.52 1277.51 360.52C1279.55 360.52 1281.46 360.52 1283.49 360.52C1285.52 360.52 1287.43 359.92 1289.47 360.52C1291.50 361.12 1293.41 363.44 1295.44 364.04C1297.47 364.63 1299.39 364.04 1301.42 364.04C1303.45 364.04 1305.36 364.04 1307.39 364.04C1309.43 364.04 1311.34 364.04 1313.37 364.04C1315.40 364.04 1317.32 364.04 1319.35 364.04C1321.38 364.04 1323.29 364.04 1325.32 364.04C1327.36 364.04 1330.28 364.04 1331.30 364.04L1331.30 365.60L978.70 365.60Z" fill="#428bca"/><path d="M978.70 364.04C979.72 364.04 982.64 364.04 984.68 364.04C986.71 364.04 988.62 364.04 990.65 364.04C992.68 364.04 994.60 364.04 996.63 364.04C998.66 364.04 1000.57 364.04 1002.61 364.04C1004.64 364.04 1006.55 364.04 1008.58 364.04C1010.61 364.04 1012.53 364.04 1014.56 364.04C1016.59 364.04 1018.50 364.17 1020.53 364.04C1022.57 363.90 1024.48 363.85 1026.51 363.25C1028.54 362.66 1030.45 360.98 1032.49 360.52C1034.52 360.05 1036.43 360.52 1038.46 360.52C1040.49 360.52 1042.41 360.52 1044.44 360.52C1046.47 360.52 1048.38 360.52 1050.42 360.52C1052.45 360.52 1054.36 360.52 1056.39 360.52C1058.42 360.52 1060.34 360.52 1062.37 360.52C1064.40 360.52 1066.31 360.52 1068.34 360.52C1070.38 360.52 1072.29 360.52 1074.32 360.52C1076.35 360.52 1078.26 360.52 1080.30 360.52C1082.33 360.52 1084.24 360.52 1086.27 360.52C1088.30 360.52 1090.22 360.52 1092.25 360.52C1094.28 360.52 1096.19 360.52 1098.23 360.52C1100.26 360.52 1102.17 360.52 1104.20 360.52C1106.23 360.52 1108.15 360.52 1110.18 360.52C1112.21 360.52 1114.12 360.52 1116.15 360.52C1118.19 360.52 1120.10 360.52 1122.13 360.52C1124.16 360.52 1126.07 359.92 1128.11 360.52C1130.14 361.12 1132.05 363.44 1134.08 364.04C1136.11 364.63 1138.03 364.04 1140.06 364.04C1142.09 364.04 1144.00 364.04 1146.04 364.04C1148.07 364.04 1149.98 364.04 1152.01 364.04C1154.04 364.04 1155.96 364.04 1157.99 364.04C1160.02 364.04 1161.93 364.04 1163.96 364.04C1166.00 364.04 1167.91 364.04 1169.94 364.04C1171.97 364.04 1173.89 364.17 1175.92 364.04C1177.95 363.90 1179.86 363.41 1181.89 363.25C1183.93 363.09 1185.84 363.56 1187.87 363.10C1189.90 362.63 1191.81 360.96 1193.85 360.52C1195.88 360.08 1197.79 360.52 1199.82 360.52C1201.85 360.52 1203.77 360.52 1205.80 360.52C1207.83 360.52 1209.74 360.52 1211.77 360.52C1213.81 360.52 1215.72 360.52 1217.75 360.52C1219.78 360.52 1221.70 360.52 1223.73 360.52C1225.76 360.52 1227.67 360.52 1229.70 360.52C1231.74 360.52 1233.65 360.52 1235.68 360.52C1237.71 360.52 1239.62 360.52 1241.66 360.52C1243.69 360.52 1245.60 360.52 1247.63 360.52C1249.66 360.52 1251.58 360.52 1253.61 360.52C1255.64 360.52 1257.55 360.52 1259.58 360.52C1261.62 360.52 1263.53 360.52 1265.56 360.52C1267.59 360.52 1269.51 360.52 1271.54 360.52C1273.57 360.52 1275.48 360.52 1277.51 360.52C1279.55 360.52 1281.46 360.52 1283.49 360.52C1285.52 360.52 1287.43 359.92 1289.47 360.52C1291.50 361.12 1293.41 363.44 1295.44 364.04C1297.47 364.63 1299.39 364.04 1301.42 364.04C1303.45 364.04 1305.36 364.04 1307.39 364.04C1309.43 364.04 1311.34 364.04 1313.37 364.04C1315.40 364.04 1317.32 364.04 1319.35 364.04C1321.38 364.04 1323.29 364.04 1325.32 364.04C1327.36 364.04 1330.28 364.04 1331.30 364.04" fill="none" stroke="#428bca" stroke-width="3" stroke-linejoin="round"/><path d="M1442.4 282.3V365.6" stroke="#e2e2e2" stroke-width="1.5" fill="none"/><path d="M1434.6 365.6H1802.6" stroke="#e2e2e2" stroke-width="1.5" fill="none"/><path d="M1434.6 287.4H1442.4" stroke="#e2e2e2" stroke-width="1.5" fill="none"/><path d="M1434.6 306.9H1442.4" stroke="#e2e2e2" stroke-width="1.5" fill="none"/><path d="M1434.6 326.5H1442.4" stroke="#e2e2e2" stroke-width="1.5" fill="none"/><path d="M1434.6 346.1H1442.4" stroke="#e2e2e2" stroke-width="1.5" fill="none"/><path d="M1442.4 365.6v7M1448.4 365.6v7M1454.3 365.6v7M1460.3 365.6v7M1466.3 365.6v7M1472.3 365.6v7M1478.2 365.6v7M1484.2 365.6v7M1490.2 365.6v7M1496.2 365.6v7M1502.1 365.6v7M1508.1 365.6v7M1514.1 365.6v7M1520.1 365.6v7M1526.0 365.6v7M1532.0 365.6v7M1538.0 365.6v7M1544.0 365.6v7M1549.9 365.6v7M1555.9 365.6v7M1561.9 365.6v7M1567.9 365.6v7M1573.8 365.6v7M1579.8 365.6v7M1585.8 365.6v7M1591.8 365.6v7M1597.7 365.6v7M1603.7 365.6v7M1609.7 365.6v7M1615.7 365.6v7M1621.6 365.6v7M1627.6 365.6v7M1633.6 365.6v7M1639.6 365.6v7M1645.5 365.6v7M1651.5 365.6v7M1657.5 365.6v7M1663.5 365.6v7M1669.4 365.6v7M1675.4 365.6v7M1681.4 365.6v7M1687.4 365.6v7M1693.3 365.6v7M1699.3 365.6v7M1705.3 365.6v7M1711.3 365.6v7M1717.2 365.6v7M1723.2 365.6v7M1729.2 365.6v7M1735.2 365.6v7M1741.1 365.6v7M1747.1 365.6v7M1753.1 365.6v7M1759.1 365.6v7M1765.0 365.6v7M1771.0 365.6v7M1777.0 365.6v7M1783.0 365.6v7M1788.9 365.6v7M1794.9 365.6v7" stroke="#e9e9e9" stroke-width="2" fill="none"/><text x="1426.2" y="293.0" text-anchor="end" font-size="17.2" fill="#666">120</text><text x="1426.2" y="312.9" text-anchor="end" font-size="17.2" fill="#666">90</text><text x="1426.2" y="332.1" text-anchor="end" font-size="17.2" fill="#666">60</text><text x="1426.2" y="351.9" text-anchor="end" font-size="17.2" fill="#666">30</text><text x="1426.2" y="372.0" text-anchor="end" font-size="17.2" fill="#666">0</text><path d="M1442.40 365.60C1443.42 365.60 1446.34 365.60 1448.37 365.60C1450.41 365.60 1452.32 365.60 1454.35 365.60C1456.38 365.60 1458.29 365.60 1460.32 365.60C1462.36 365.60 1464.27 365.60 1466.30 365.60C1468.33 365.60 1470.24 365.60 1472.27 365.60C1474.30 365.60 1476.22 365.60 1478.25 365.60C1480.28 365.60 1482.19 365.60 1484.22 365.60C1486.25 365.60 1488.17 365.60 1490.20 365.60C1492.23 365.60 1494.14 365.60 1496.17 365.60C1498.20 365.60 1500.11 365.60 1502.15 365.60C1504.18 365.60 1506.09 365.60 1508.12 365.60C1510.15 365.60 1512.06 365.60 1514.09 365.60C1516.13 365.60 1518.04 365.60 1520.07 365.60C1522.10 365.60 1524.01 365.60 1526.04 365.60C1528.08 365.60 1529.99 365.60 1532.02 365.60C1534.05 365.60 1535.96 365.60 1537.99 365.60C1540.02 365.60 1541.94 365.60 1543.97 365.60C1546.00 365.60 1547.91 365.60 1549.94 365.60C1551.97 365.60 1553.89 365.60 1555.92 365.60C1557.95 365.60 1559.86 365.60 1561.89 365.60C1563.92 365.60 1565.83 365.60 1567.87 365.60C1569.90 365.60 1571.81 365.60 1573.84 365.60C1575.87 365.60 1577.78 365.60 1579.82 365.60C1581.85 365.60 1583.76 365.60 1585.79 365.60C1587.82 365.60 1589.73 365.60 1591.76 365.60C1593.80 365.60 1595.71 365.60 1597.74 365.60C1599.77 365.60 1601.68 365.60 1603.71 365.60C1605.74 365.60 1607.66 365.60 1609.69 365.60C1611.72 365.60 1613.63 365.60 1615.66 365.60C1617.69 365.60 1619.61 365.60 1621.64 365.60C1623.67 365.60 1625.58 365.60 1627.61 365.60C1629.64 365.60 1631.56 365.60 1633.59 365.60C1635.62 365.60 1637.53 365.60 1639.56 365.60C1641.59 365.60 1643.50 365.60 1645.54 365.60C1647.57 365.60 1649.48 365.60 1651.51 365.60C1653.54 365.60 1655.45 365.60 1657.48 365.60C1659.52 365.60 1661.43 365.60 1663.46 365.60C1665.49 365.60 1667.40 365.60 1669.43 365.60C1671.47 365.60 1673.38 365.60 1675.41 365.60C1677.44 365.60 1679.35 365.60 1681.38 365.60C1683.41 365.60 1685.33 365.60 1687.36 365.60C1689.39 365.60 1691.30 365.60 1693.33 365.60C1695.36 365.60 1697.28 365.60 1699.31 365.60C1701.34 365.60 1703.25 365.60 1705.28 365.60C1707.31 365.60 1709.22 365.60 1711.26 365.60C1713.29 365.60 1715.20 365.60 1717.23 365.60C1719.26 365.60 1721.17 365.60 1723.21 365.60C1725.24 365.60 1727.15 365.60 1729.18 365.60C1731.21 365.60 1733.12 365.60 1735.15 365.60C1737.19 365.60 1739.10 365.60 1741.13 365.60C1743.16 365.60 1745.07 365.60 1747.10 365.60C1749.13 365.60 1751.05 365.60 1753.08 365.60C1755.11 365.60 1757.02 365.60 1759.05 365.60C1761.08 365.60 1763.00 365.60 1765.03 365.60C1767.06 365.60 1768.97 365.60 1771.00 365.60C1773.03 365.60 1774.94 365.60 1776.98 365.60C1779.01 365.60 1780.92 365.60 1782.95 365.60C1784.98 365.60 1786.89 365.60 1788.93 365.60C1790.96 365.60 1793.88 365.60 1794.90 365.60L1794.90 365.60L1442.40 365.60Z" fill="#428bca"/><path d="M1442.40 365.60C1443.42 365.60 1446.34 365.60 1448.37 365.60C1450.41 365.60 1452.32 365.60 1454.35 365.60C1456.38 365.60 1458.29 365.60 1460.32 365.60C1462.36 365.60 1464.27 365.60 1466.30 365.60C1468.33 365.60 1470.24 365.60 1472.27 365.60C1474.30 365.60 1476.22 365.60 1478.25 365.60C1480.28 365.60 1482.19 365.60 1484.22 365.60C1486.25 365.60 1488.17 365.60 1490.20 365.60C1492.23 365.60 1494.14 365.60 1496.17 365.60C1498.20 365.60 1500.11 365.60 1502.15 365.60C1504.18 365.60 1506.09 365.60 1508.12 365.60C1510.15 365.60 1512.06 365.60 1514.09 365.60C1516.13 365.60 1518.04 365.60 1520.07 365.60C1522.10 365.60 1524.01 365.60 1526.04 365.60C1528.08 365.60 1529.99 365.60 1532.02 365.60C1534.05 365.60 1535.96 365.60 1537.99 365.60C1540.02 365.60 1541.94 365.60 1543.97 365.60C1546.00 365.60 1547.91 365.60 1549.94 365.60C1551.97 365.60 1553.89 365.60 1555.92 365.60C1557.95 365.60 1559.86 365.60 1561.89 365.60C1563.92 365.60 1565.83 365.60 1567.87 365.60C1569.90 365.60 1571.81 365.60 1573.84 365.60C1575.87 365.60 1577.78 365.60 1579.82 365.60C1581.85 365.60 1583.76 365.60 1585.79 365.60C1587.82 365.60 1589.73 365.60 1591.76 365.60C1593.80 365.60 1595.71 365.60 1597.74 365.60C1599.77 365.60 1601.68 365.60 1603.71 365.60C1605.74 365.60 1607.66 365.60 1609.69 365.60C1611.72 365.60 1613.63 365.60 1615.66 365.60C1617.69 365.60 1619.61 365.60 1621.64 365.60C1623.67 365.60 1625.58 365.60 1627.61 365.60C1629.64 365.60 1631.56 365.60 1633.59 365.60C1635.62 365.60 1637.53 365.60 1639.56 365.60C1641.59 365.60 1643.50 365.60 1645.54 365.60C1647.57 365.60 1649.48 365.60 1651.51 365.60C1653.54 365.60 1655.45 365.60 1657.48 365.60C1659.52 365.60 1661.43 365.60 1663.46 365.60C1665.49 365.60 1667.40 365.60 1669.43 365.60C1671.47 365.60 1673.38 365.60 1675.41 365.60C1677.44 365.60 1679.35 365.60 1681.38 365.60C1683.41 365.60 1685.33 365.60 1687.36 365.60C1689.39 365.60 1691.30 365.60 1693.33 365.60C1695.36 365.60 1697.28 365.60 1699.31 365.60C1701.34 365.60 1703.25 365.60 1705.28 365.60C1707.31 365.60 1709.22 365.60 1711.26 365.60C1713.29 365.60 1715.20 365.60 1717.23 365.60C1719.26 365.60 1721.17 365.60 1723.21 365.60C1725.24 365.60 1727.15 365.60 1729.18 365.60C1731.21 365.60 1733.12 365.60 1735.15 365.60C1737.19 365.60 1739.10 365.60 1741.13 365.60C1743.16 365.60 1745.07 365.60 1747.10 365.60C1749.13 365.60 1751.05 365.60 1753.08 365.60C1755.11 365.60 1757.02 365.60 1759.05 365.60C1761.08 365.60 1763.00 365.60 1765.03 365.60C1767.06 365.60 1768.97 365.60 1771.00 365.60C1773.03 365.60 1774.94 365.60 1776.98 365.60C1779.01 365.60 1780.92 365.60 1782.95 365.60C1784.98 365.60 1786.89 365.60 1788.93 365.60C1790.96 365.60 1793.88 365.60 1794.90 365.60" fill="none" stroke="#428bca" stroke-width="3" stroke-linejoin="round"/></svg>
<div class="panel" style="left:-3px;top:467px;width:1810px;height:332px"><div class="ph" style="height:60px"></div></div>
<svg class="ic" style="left:23.10px;top:486.91px;width:22.70px;height:21.19px;" viewBox="0 -1536 1920 1792"><path fill="#333" transform="scale(1,-1)" d="M593 640q-162 -5 -265 -128h-134q-82 0 -138 40.5t-56 118.5q0 353 124 353q6 0 43.5 -21t97.5 -42.5t119 -21.5q67 0 133 23q-5 -37 -5 -66q0 -139 81 -256zM1664 3q0 -120 -73 -189.5t-194 -69.5h-874q-121 0 -194 69.5t-73 189.5q0 53 3.5 103.5t14 109t26.5 108.5 t43 97.5t62 81t85.5 53.5t111.5 20q10 0 43 -21.5t73 -48t107 -48t135 -21.5t135 21.5t107 48t73 48t43 21.5q61 0 111.5 -20t85.5 -53.5t62 -81t43 -97.5t26.5 -108.5t14 -109t3.5 -103.5zM640 1280q0 -106 -75 -181t-181 -75t-181 75t-75 181t75 181t181 75t181 -75 t75 -181zM1344 896q0 -159 -112.5 -271.5t-271.5 -112.5t-271.5 112.5t-112.5 271.5t112.5 271.5t271.5 112.5t271.5 -112.5t112.5 -271.5zM1920 671q0 -78 -56 -118.5t-138 -40.5h-134q-103 123 -265 128q81 117 81 256q0 29 -5 66q66 -23 133 -23q59 0 119 21.5t97.5 42.5 t43.5 21q124 0 124 -353zM1792 1280q0 -106 -75 -181t-181 -75t-181 75t-75 181t75 181t181 75t181 -75t75 -181z"/></svg>
<div class="t" style="left:53.40px;top:486.02px;font-size:21px;line-height:21px;color:#333;font-weight:normal;letter-spacing:.05px">Session Monitor</div>
<svg class="ic" style="left:1602.80px;top:486.86px;width:22.80px;height:21.28px;" viewBox="0 -1536 1920 1792"><path fill="#428bca" transform="scale(1,-1)" d="M593 640q-162 -5 -265 -128h-134q-82 0 -138 40.5t-56 118.5q0 353 124 353q6 0 43.5 -21t97.5 -42.5t119 -21.5q67 0 133 23q-5 -37 -5 -66q0 -139 81 -256zM1664 3q0 -120 -73 -189.5t-194 -69.5h-874q-121 0 -194 69.5t-73 189.5q0 53 3.5 103.5t14 109t26.5 108.5 t43 97.5t62 81t85.5 53.5t111.5 20q10 0 43 -21.5t73 -48t107 -48t135 -21.5t135 21.5t107 48t73 48t43 21.5q61 0 111.5 -20t85.5 -53.5t62 -81t43 -97.5t26.5 -108.5t14 -109t3.5 -103.5zM640 1280q0 -106 -75 -181t-181 -75t-181 75t-75 181t75 181t181 75t181 -75 t75 -181zM1344 896q0 -159 -112.5 -271.5t-271.5 -112.5t-271.5 112.5t-112.5 271.5t112.5 271.5t271.5 112.5t271.5 -112.5t112.5 -271.5zM1920 671q0 -78 -56 -118.5t-138 -40.5h-134q-103 123 -265 128q81 117 81 256q0 29 -5 66q66 -23 133 -23q59 0 119 21.5t97.5 42.5 t43.5 21q124 0 124 -353zM1792 1280q0 -106 -75 -181t-181 -75t-181 75t-75 181t75 181t181 75t181 -75t75 -181z"/></svg>
<svg class="ic" style="left:1646.70px;top:486.95px;width:19.40px;height:20.89px;" viewBox="0 -1536 1664 1792"><path fill="#428bca" transform="scale(1,-1)" d="M160 0h608v1152h-640v-1120q0 -13 9.5 -22.5t22.5 -9.5zM1536 32v1120h-640v-1152h608q13 0 22.5 9.5t9.5 22.5zM1664 1248v-1216q0 -66 -47 -113t-113 -47h-1344q-66 0 -113 47t-47 113v1216q0 66 47 113t113 47h1344q66 0 113 -47t47 -113z"/></svg>
<svg class="ic" style="left:1681.30px;top:486.55px;width:12.30px;height:21.52px;" viewBox="0 -1536 1024 1792"><path fill="#428bca" transform="scale(1,-1)" d="M1024 832q0 -26 -19 -45l-448 -448q-19 -19 -45 -19t-45 19l-448 448q-19 19 -19 45t19 45t45 19h896q26 0 45 -19t19 -45z"/></svg>
<svg class="ic" style="left:1718.88px;top:487.17px;width:11.87px;height:20.78px;" viewBox="0 -1536 1024 1792"><path fill="#428bca" transform="scale(1,-1)" d="M627 160q0 -13 -10 -23l-50 -50q-10 -10 -23 -10t-23 10l-466 466q-10 10 -10 23t10 23l466 466q10 10 23 10t23 -10l50 -50q10 -10 10 -23t-10 -23l-393 -393l393 -393q10 -10 10 -23zM1011 160q0 -13 -10 -23l-50 -50q-10 -10 -23 -10t-23 10l-466 466q-10 10 -10 23 t10 23l466 466q10 10 23 10t23 -10l50 -50q10 -10 10 -23t-10 -23l-393 -393l393 -393q10 -10 10 -23z"/></svg>
<svg class="ic" style="left:1762.48px;top:486.73px;width:13.74px;height:21.37px;" viewBox="0 -1536 1152 1792"><path fill="#428bca" transform="scale(1,-1)" d="M1075 224q0 -13 -10 -23l-50 -50q-10 -10 -23 -10t-23 10l-393 393l-393 -393q-10 -10 -23 -10t-23 10l-50 50q-10 10 -10 23t10 23l466 466q10 10 23 10t23 -10l466 -466q10 -10 10 -23zM1075 608q0 -13 -10 -23l-50 -50q-10 -10 -23 -10t-23 10l-393 393l-393 -393 q-10 -10 -23 -10t-23 10l-50 50q-10 10 -10 23t10 23l466 466q10 10 23 10t23 -10l466 -466q10 -10 10 -23z"/></svg>
<div class="abs" style="left:0;top:772px;width:1805px;height:25px;background:#f1f1f1"></div>
<svg class="ic" style="left:0;top:772px;width:1805px;height:25px" viewBox="0 0 1805 25"><path d="M7.9 12.4L14.4 6.8V18z" fill="#a3a3a8"/><path d="M1797 12.4L1790.5 6.8V18z" fill="#a3a3a8"/></svg>
<table style="left:21.0px;top:552.0px;width:1761px"><colgroup>
<col style="width:75px">
<col style="width:206px">
<col style="width:108px">
<col style="width:147px">
<col style="width:178px">
<col style="width:188px">
<col style="width:138px">
<col style="width:207px">
<col style="width:172px">
<col style="width:137px">
<col style="width:95px">
<col style="width:109px">
</colgroup><thead><tr>
<th class="hc"><span class="hl" style="left:16.00px;top:12.12px">#</span><svg class="ic" style="left:38.60px;top:18.00px;width:12.00px;height:21.0px;transform:scaleY(.87)" viewBox="0 -1536 1024 1792"><path fill="#b0afb4" transform="scale(1,-1)" d="M1024 448q0 -26 -19 -45l-448 -448q-19 -19 -45 -19t-45 19l-448 448q-19 19 -19 45t19 45t45 19h896q26 0 45 -19t19 -45zM1024 832q0 -26 -19 -45t-45 -19h-896q-26 0 -45 19t-19 45t19 45l448 448q19 19 45 19t45 -19l448 -448q19 -19 19 -45z"/></svg></th>
<th class="hc"><span class="hl" style="left:34.00px;top:12.12px">User Name</span><svg class="ic" style="left:169.20px;top:18.00px;width:12.00px;height:21.0px;transform:scaleY(.87)" viewBox="0 -1536 1024 1792"><path fill="#b0afb4" transform="scale(1,-1)" d="M1024 448q0 -26 -19 -45l-448 -448q-19 -19 -45 -19t-45 19l-448 448q-19 19 -19 45t19 45t45 19h896q26 0 45 -19t19 -45zM1024 832q0 -26 -19 -45t-45 -19h-896q-26 0 -45 19t-19 45t19 45l448 448q19 19 45 19t45 -19l448 -448q19 -19 19 -45z"/></svg></th>
<th class="hc"><span class="hl" style="left:13.70px;top:12.12px">State</span><svg class="ic" style="left:71.20px;top:18.00px;width:12.00px;height:21.0px;transform:scaleY(.87)" viewBox="0 -1536 1024 1792"><path fill="#b0afb4" transform="scale(1,-1)" d="M1024 448q0 -26 -19 -45l-448 -448q-19 -19 -45 -19t-45 19l-448 448q-19 19 -19 45t19 45t45 19h896q26 0 45 -19t19 -45zM1024 832q0 -26 -19 -45t-45 -19h-896q-26 0 -45 19t-19 45t19 45l448 448q19 19 45 19t45 -19l448 -448q19 -19 19 -45z"/></svg></th>
<th class="hc"><span class="hl" style="left:14.50px;top:12.12px">Function</span><svg class="ic" style="left:110.10px;top:18.00px;width:12.00px;height:21.0px;transform:scaleY(.87)" viewBox="0 -1536 1024 1792"><path fill="#b0afb4" transform="scale(1,-1)" d="M1024 448q0 -26 -19 -45l-448 -448q-19 -19 -45 -19t-45 19l-448 448q-19 19 -19 45t19 45t45 19h896q26 0 45 -19t19 -45zM1024 832q0 -26 -19 -45t-45 -19h-896q-26 0 -45 19t-19 45t19 45l448 448q19 19 45 19t45 -19l448 -448q19 -19 19 -45z"/></svg></th>
<th class="hc"><span class="hl" style="left:15.20px;top:12.12px">Object Type</span><svg class="ic" style="left:141.10px;top:18.00px;width:12.00px;height:21.0px;transform:scaleY(.87)" viewBox="0 -1536 1024 1792"><path fill="#b0afb4" transform="scale(1,-1)" d="M1024 448q0 -26 -19 -45l-448 -448q-19 -19 -45 -19t-45 19l-448 448q-19 19 -19 45t19 45t45 19h896q26 0 45 -19t19 -45zM1024 832q0 -26 -19 -45t-45 -19h-896q-26 0 -45 19t-19 45t19 45l448 448q19 19 45 19t45 -19l448 -448q19 -19 19 -45z"/></svg></th>
<th class="hc"><span class="hl" style="left:15.10px;top:12.12px">Object Name</span><svg class="ic" style="left:150.80px;top:18.00px;width:12.00px;height:21.0px;transform:scaleY(.87)" viewBox="0 -1536 1024 1792"><path fill="#b0afb4" transform="scale(1,-1)" d="M1024 448q0 -26 -19 -45l-448 -448q-19 -19 -45 -19t-45 19l-448 448q-19 19 -19 45t19 45t45 19h896q26 0 45 -19t19 -45zM1024 832q0 -26 -19 -45t-45 -19h-896q-26 0 -45 19t-19 45t19 45l448 448q19 19 45 19t45 -19l448 -448q19 -19 19 -45z"/></svg></th>
<th class="hc"><span class="hl" style="left:15.40px;top:12.12px">Time (s)</span><svg class="ic" style="left:100.90px;top:18.00px;width:12.00px;height:21.0px;transform:scaleY(.87)" viewBox="0 -1536 1024 1792"><path fill="#b0afb4" transform="scale(1,-1)" d="M1024 448q0 -26 -19 -45l-448 -448q-19 -19 -45 -19t-45 19l-448 448q-19 19 -19 45t19 45t45 19h896q26 0 45 -19t19 -45zM1024 832q0 -26 -19 -45t-45 -19h-896q-26 0 -45 19t-19 45t19 45l448 448q19 19 45 19t45 -19l448 -448q19 -19 19 -45z"/></svg></th>
<th class="hc"><span class="hl" style="left:16.00px;top:12.12px">Last Action (s)</span><svg class="ic" style="left:169.50px;top:18.00px;width:12.00px;height:21.0px;transform:scaleY(.87)" viewBox="0 -1536 1024 1792"><path fill="#b0afb4" transform="scale(1,-1)" d="M1024 448q0 -26 -19 -45l-448 -448q-19 -19 -45 -19t-45 19l-448 448q-19 19 -19 45t19 45t45 19h896q26 0 45 -19t19 -45zM1024 832q0 -26 -19 -45t-45 -19h-896q-26 0 -45 19t-19 45t19 45l448 448q19 19 45 19t45 -19l448 -448q19 -19 19 -45z"/></svg></th>
<th class="hc"><span class="hl" style="left:15.30px;top:12.12px">Session (s)</span><svg class="ic" style="left:134.80px;top:18.00px;width:12.00px;height:21.0px;transform:scaleY(.87)" viewBox="0 -1536 1024 1792"><path fill="#b0afb4" transform="scale(1,-1)" d="M1024 448q0 -26 -19 -45l-448 -448q-19 -19 -45 -19t-45 19l-448 448q-19 19 -19 45t19 45t45 19h896q26 0 45 -19t19 -45zM1024 832q0 -26 -19 -45t-45 -19h-896q-26 0 -45 19t-19 45t19 45l448 448q19 19 45 19t45 -19l448 -448q19 -19 19 -45z"/></svg></th>
<th class="hc"><span class="hl" style="left:14.50px;top:12.12px">Context</span><svg class="ic" style="left:99.90px;top:18.00px;width:12.00px;height:21.0px;transform:scaleY(.87)" viewBox="0 -1536 1024 1792"><path fill="#b0afb4" transform="scale(1,-1)" d="M1024 448q0 -26 -19 -45l-448 -448q-19 -19 -45 -19t-45 19l-448 448q-19 19 -19 45t19 45t45 19h896q26 0 45 -19t19 -45zM1024 832q0 -26 -19 -45t-45 -19h-896q-26 0 -45 19t-19 45t19 45l448 448q19 19 45 19t45 -19l448 -448q19 -19 19 -45z"/></svg></th>
<th class="hc"><span class="hl" style="left:13.70px;top:12.12px">Info</span><svg class="ic" style="left:58.10px;top:18.00px;width:12.00px;height:21.0px;transform:scaleY(.87)" viewBox="0 -1536 1024 1792"><path fill="#b0afb4" transform="scale(1,-1)" d="M1024 448q0 -26 -19 -45l-448 -448q-19 -19 -45 -19t-45 19l-448 448q-19 19 -19 45t19 45t45 19h896q26 0 45 -19t19 -45zM1024 832q0 -26 -19 -45t-45 -19h-896q-26 0 -45 19t-19 45t19 45l448 448q19 19 45 19t45 -19l448 -448q19 -19 19 -45z"/></svg></th>
<th class="hc"><span class="hl" style="left:14.40px;top:12.12px">Actions</span></th>
</tr></thead><tbody>
<tr style="background:#f9f9f9">
<td>3016</td>
<td>Th:Pseudo</td>
<td>Idle</td>
<td>-</td>
<td>-</td>
<td>-</td>
<td>0</td>
<td>0</td>
<td>0</td>
<td>-</td>
<td>-</td>
<td style="padding:0"><div class="btn"><svg class="ic" style="left:19.3px;top:9.0px;width:20.43px;height:22.0px" viewBox="0 -1536 1664 1792"><path fill="#fff" transform="scale(1,-1)" d="M640 96q0 -4 1 -20t0.5 -26.5t-3 -23.5t-10 -19.5t-20.5 -6.5h-320q-119 0 -203.5 84.5t-84.5 203.5v704q0 119 84.5 203.5t203.5 84.5h320q13 0 22.5 -9.5t9.5 -22.5q0 -4 1 -20t0.5 -26.5t-3 -23.5t-10 -19.5t-20.5 -6.5h-320q-66 0 -113 -47t-47 -113v-704 q0 -66 47 -113t113 -47h288h11h13t11.5 -1t11.5 -3t8 -5.5t7 -9t2 -13.5zM1568 640q0 -26 -19 -45l-544 -544q-19 -19 -45 -19t-45 19t-19 45v288h-448q-26 0 -45 19t-19 45v384q0 26 19 45t45 19h448v288q0 26 19 45t45 19t45 -19l544 -544q19 -19 19 -45z"/></svg></div></td>
</tr>
<tr style="background:#fff">
<td>2020</td>
<td>Th:DynamicConfig</td>
<td>Idle</td>
<td>-</td>
<td>-</td>
<td>-</td>
<td>0</td>
<td>0</td>
<td>0</td>
<td>-</td>
<td>-</td>
<td style="padding:0"><div class="btn"><svg class="ic" style="left:19.3px;top:9.0px;width:20.43px;height:22.0px" viewBox="0 -1536 1664 1792"><path fill="#fff" transform="scale(1,-1)" d="M640 96q0 -4 1 -20t0.5 -26.5t-3 -23.5t-10 -19.5t-20.5 -6.5h-320q-119 0 -203.5 84.5t-84.5 203.5v704q0 119 84.5 203.5t203.5 84.5h320q13 0 22.5 -9.5t9.5 -22.5q0 -4 1 -20t0.5 -26.5t-3 -23.5t-10 -19.5t-20.5 -6.5h-320q-66 0 -113 -47t-47 -113v-704 q0 -66 47 -113t113 -47h288h11h13t11.5 -1t11.5 -3t8 -5.5t7 -9t2 -13.5zM1568 640q0 -26 -19 -45l-544 -544q-19 -19 -45 -19t-45 19t-19 45v288h-448q-26 0 -45 19t-19 45v384q0 26 19 45t45 19h448v288q0 26 19 45t45 19t45 -19l544 -544q19 -19 19 -45z"/></svg></div></td>
</tr>
</tbody></table>
<div class="panel" style="left:-3px;top:852px;width:1810px;height:400px"><div class="ph" style="height:60px"></div></div>
<svg class="ic" style="left:23.80px;top:871.71px;width:21.40px;height:21.40px;" viewBox="0 -1536 1792 1792"><path fill="#333" transform="scale(1,-1)" d="M1792 192v-128q0 -26 -19 -45t-45 -19h-1664q-26 0 -45 19t-19 45v128q0 26 19 45t45 19h1664q26 0 45 -19t19 -45zM1792 576v-128q0 -26 -19 -45t-45 -19h-1664q-26 0 -45 19t-19 45v128q0 26 19 45t45 19h1664q26 0 45 -19t19 -45zM1792 960v-128q0 -26 -19 -45 t-45 -19h-1664q-26 0 -45 19t-19 45v128q0 26 19 45t45 19h1664q26 0 45 -19t19 -45zM1792 1344v-128q0 -26 -19 -45t-45 -19h-1664q-26 0 -45 19t-19 45v128q0 26 19 45t45 19h1664q26 0 45 -19t19 -45z"/></svg>
<div class="t" style="left:53.00px;top:871.82px;font-size:21px;line-height:21px;color:#333;font-weight:normal;letter-spacing:.1px">Message Log</div>
<div class="abs" style="left:21px;top:937px;width:1762px;height:51px;border:2px solid #d0d0d0;border-radius:6px;background:#fff;box-shadow:inset 0 1px 1px rgba(0,0,0,.06)"></div>
<div class="t" style="left:40.00px;top:951.22px;font-size:21px;line-height:21px;color:#999;font-weight:normal;">Filter message...</div>
<div class="abs" style="left:21px;top:1010px;width:1762px;height:46px;border:2px solid #d0d0d0;border-radius:6px;background:#fff;box-shadow:inset 0 1px 1px rgba(0,0,0,.06)"></div>
<div class="t" style="left:38.90px;top:1020.22px;font-size:21px;line-height:21px;color:#333;font-weight:normal;letter-spacing:.06px">Filtered Log Level...</div>
<table style="left:21px;top:1078px;width:1761px"><colgroup>
<col style="width:111px">
<col style="width:222px">
<col style="width:141px">
<col style="width:1286px">
</colgroup><thead><tr><th>#</th><th>User Name</th><th>Time</th><th>Message</th></tr></thead><tbody>
<tr style="background:#fcf8e3"><td>17040</td><td>System Thread</td><td style="letter-spacing:-.28px;padding-left:12.8px">12:07:28</td><td>Process "Bedrock.Server.Wait" run from process "Cub.GeneralLedger.LoadFromFile" by user "Admin"</td></tr>
<tr style="background:#fcf8e3"><td>&nbsp;</td><td>&nbsp;</td><td>&nbsp;</td><td>&nbsp;</td></tr>
</tbody></table>
</body></html>
